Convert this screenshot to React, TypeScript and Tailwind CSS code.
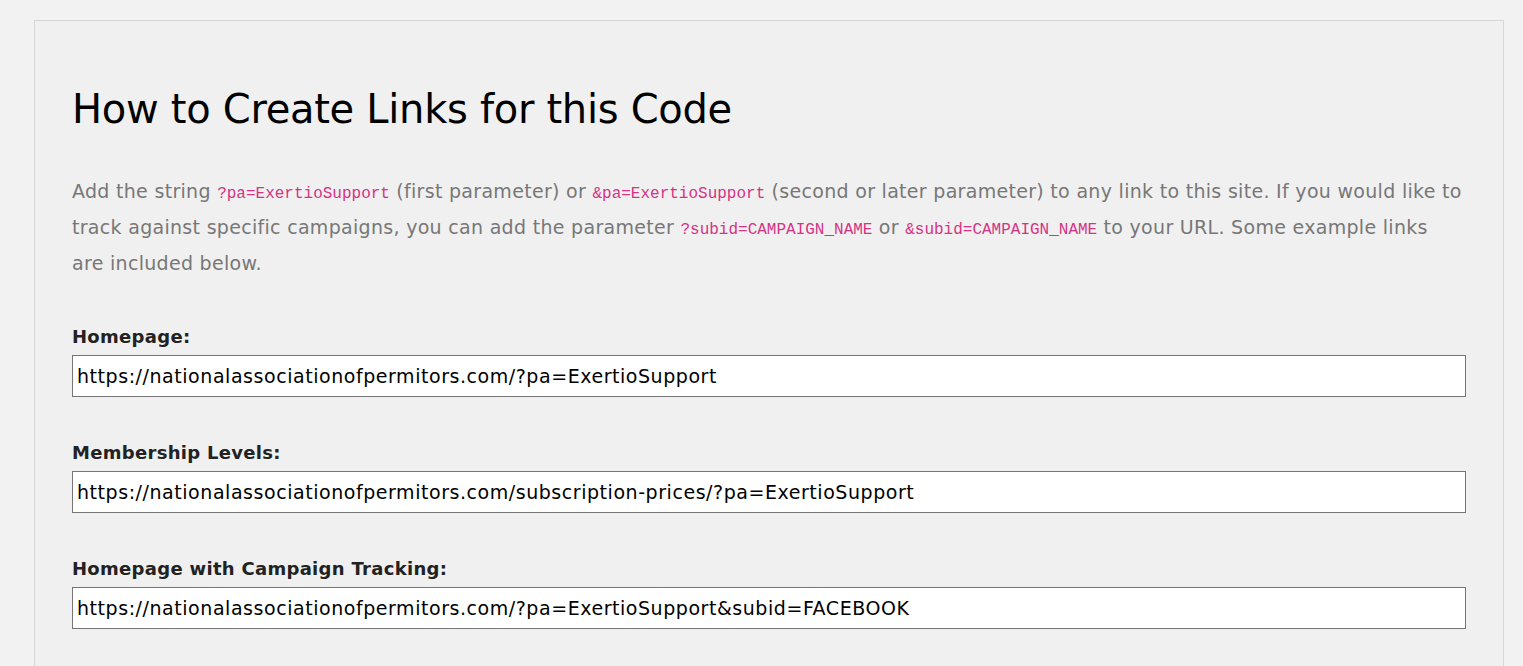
export default function App() {
  const links = [
    { label: 'Homepage:', url: 'https://nationalassociationofpermitors.com/?pa=ExertioSupport' },
    { label: 'Membership Levels:', url: 'https://nationalassociationofpermitors.com/subscription-prices/?pa=ExertioSupport' },
    { label: 'Homepage with Campaign Tracking:', url: 'https://nationalassociationofpermitors.com/?pa=ExertioSupport&subid=FACEBOOK' },
  ]

  const code = 'font-["Liberation_Mono",monospace] text-[16px] leading-none tracking-normal text-[#d63384]'

  return (
    <div className="min-h-screen bg-[#f2f2f2] pt-5 pl-[34px] pr-[19px] font-['DejaVu_Sans',sans-serif]">
      <div className="border border-[#d6d6d6] bg-[#f0f0f0] px-[37px] pt-[58px] pb-10">
        <h1 className="text-[40px] leading-[60px] tracking-[-0.3px] font-normal text-black">
          How to Create Links for this Code
        </h1>

        <p className="mt-[34px] text-[19px] leading-[36px] tracking-[0.3px] text-[#777]">
          Add the string <code className={code}>?pa=ExertioSupport</code> (first parameter) or{' '}
          <code className={code}>&amp;pa=ExertioSupport</code> (second or later parameter) to any link to this
          site. If you would like to track against specific campaigns, you can add the parameter{' '}
          <code className={code}>?subid=CAMPAIGN_NAME</code> or <code className={code}>&amp;subid=CAMPAIGN_NAME</code> to
          your URL. Some example links
          <br />
          are included below.
        </p>

        <div className="mt-[42px] flex flex-col gap-[42px]">
          {links.map((l) => (
            <div key={l.label}>
              <label className="block text-[18px] leading-[27px] tracking-[0.3px] font-bold text-[#222]">
                {l.label}
              </label>
              <input
                readOnly
                value={l.url}
                className="mt-[5px] block w-full h-[42px] border border-[#767676] bg-white px-[4px] text-[19px] tracking-[0.55px] text-black outline-none"
              />
            </div>
          ))}
        </div>
      </div>
    </div>
  )
}
